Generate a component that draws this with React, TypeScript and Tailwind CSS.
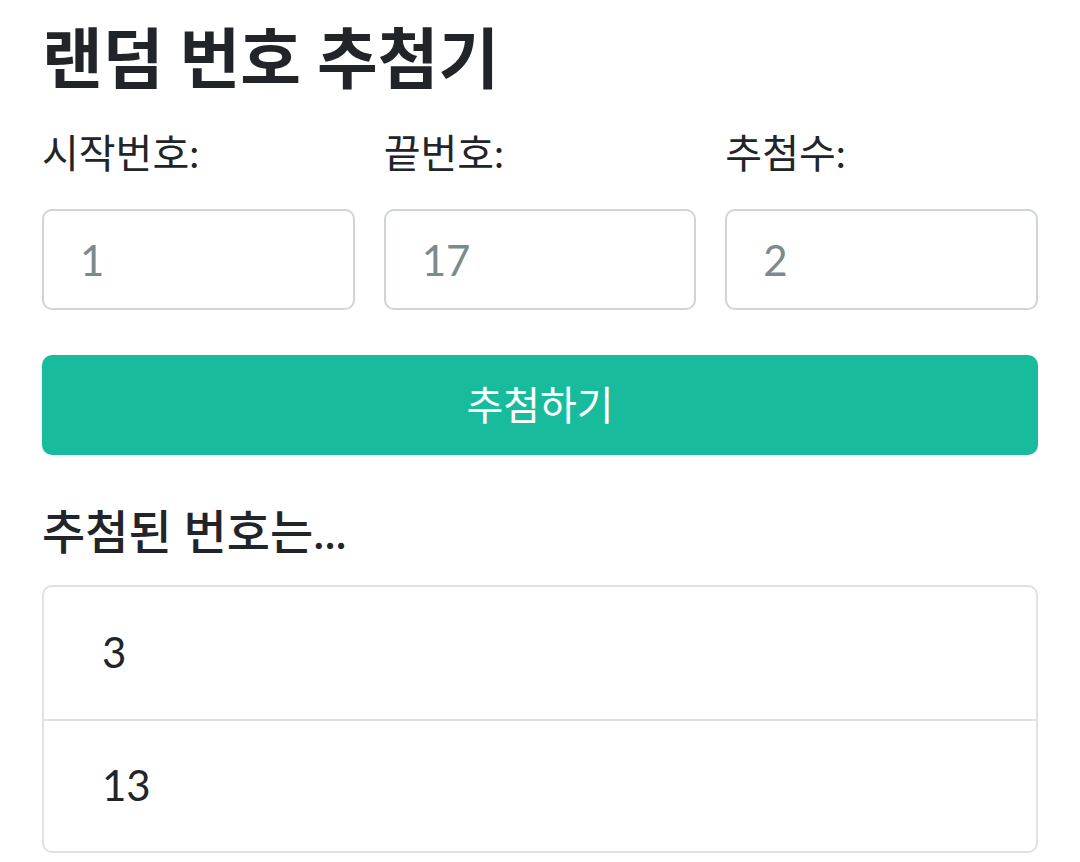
import { useState } from "react"

const FONT = "font-['Lato','Noto_Sans_CJK_KR',sans-serif]"

export default function App() {
  const [start, setStart] = useState("1")
  const [end, setEnd] = useState("17")
  const [count, setCount] = useState("2")
  const [picked] = useState<number[]>([3, 13])

  const fields = [
    { label: "시작번호:", value: start, set: setStart },
    { label: "끝번호:", value: end, set: setEnd },
    { label: "추첨수:", value: count, set: setCount },
  ]

  return (
    <div className={`${FONT} min-h-screen bg-white px-[42px] pt-[18px] text-[#212529]`}>
      <h1 className="text-[66px] font-bold leading-[1.2]">랜덤 번호 추첨기</h1>

      <div className="mt-[26px] grid grid-cols-3 gap-[29px]">
        {fields.map(f => (
          <div key={f.label}>
            <label className="block text-[40px] leading-[1.5]">{f.label}</label>
            <input
              value={f.value}
              onChange={e => f.set(e.target.value)}
              className="mt-[26px] h-[101px] w-full rounded-[10px] border-2 border-[#ced4da] px-[36px] text-[42px] text-[#7b8a8b] outline-none"
            />
          </div>
        ))}
      </div>

      <button className="mt-[45px] h-[100px] w-full rounded-[10px] bg-[#18bc9c] text-[40px] text-white">
        추첨하기
      </button>

      <h5 className="mt-[48px] text-[47px] font-medium leading-[1.2]">추첨된 번호는...</h5>

      <ul className="mt-[25px] rounded-[10px] border-2 border-[#dee2e6]">
        {picked.map((n, i) => (
          <li
            key={n}
            className={`flex h-[132px] items-center px-[58px] text-[42px] ${i > 0 ? "border-t-2 border-[#dee2e6]" : ""}`}
          >
            {n}
          </li>
        ))}
      </ul>
    </div>
  )
}
